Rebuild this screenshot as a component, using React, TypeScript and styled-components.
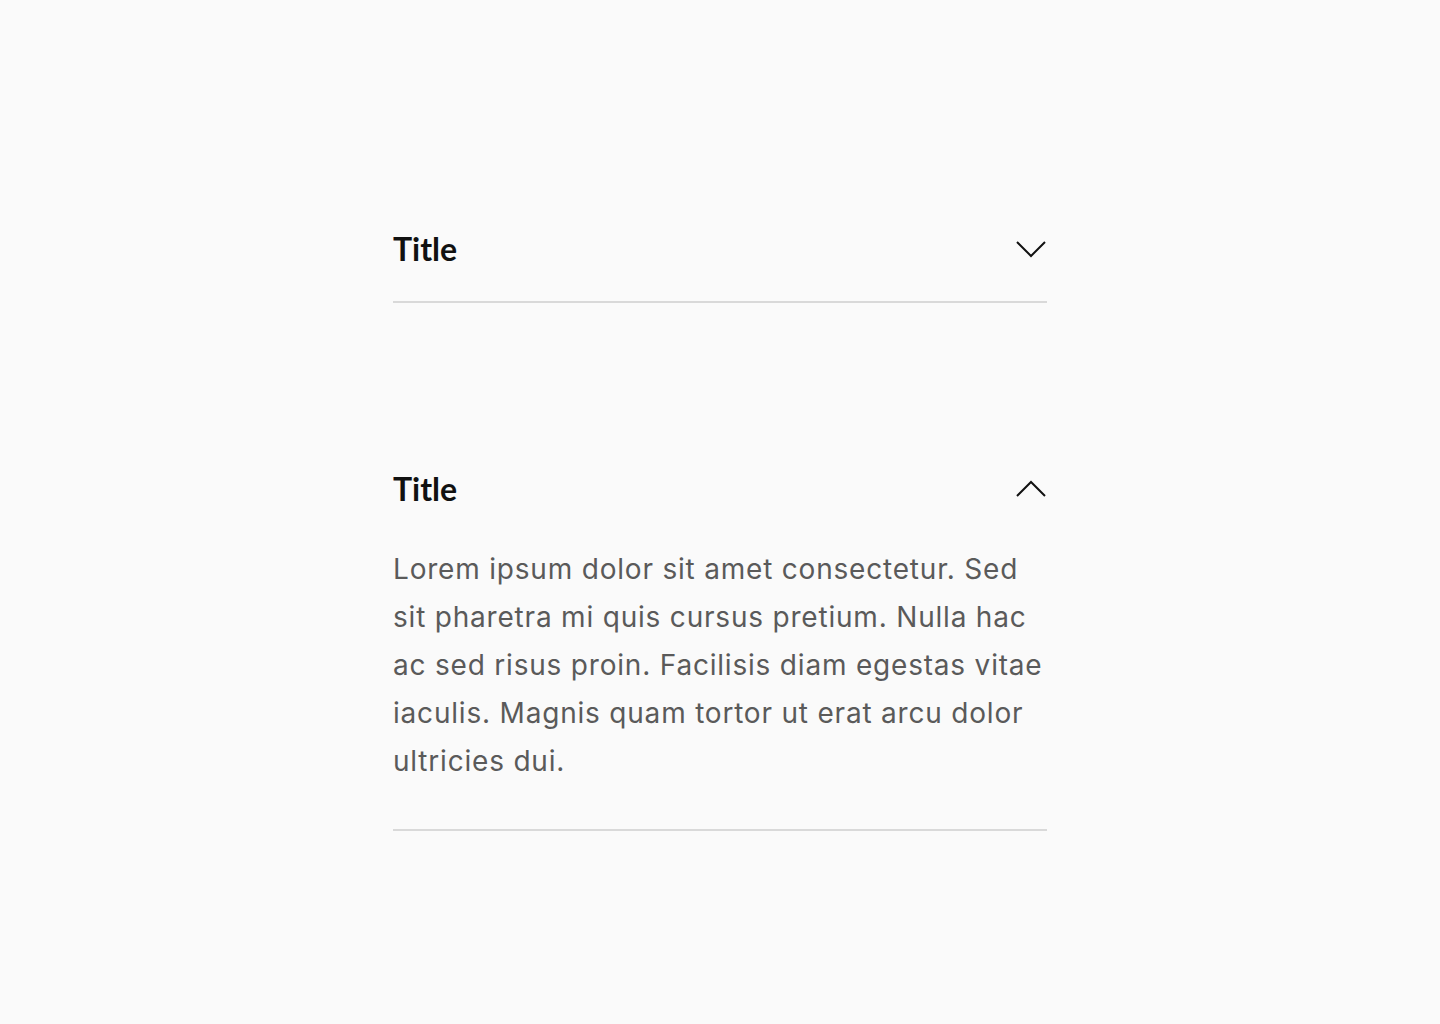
import React, { useState } from "react";
import styled, { createGlobalStyle } from "styled-components";

const Global = createGlobalStyle`
  html, body { margin: 0; padding: 0; background: #fafafa; }
  body { font-family: Lato, "Noto Sans", sans-serif; }
`;

const Page = styled.main`
  min-height: 1024px;
  display: flex;
  justify-content: center;
  padding-top: 229px;
  box-sizing: border-box;
`;

const List = styled.div`
  width: 654px;
  display: flex;
  flex-direction: column;
  gap: 166px;
`;

const Item = styled.section<{ $open: boolean }>`
  border-bottom: 2px solid #d9d9d9;
  padding-bottom: ${(p) => (p.$open ? 44 : 32)}px;
`;

const Header = styled.button`
  all: unset;
  width: 100%;
  height: 40px;
  display: flex;
  align-items: center;
  justify-content: space-between;
  cursor: pointer;
`;

const Title = styled.h3`
  margin: 0;
  font-size: 32px;
  line-height: 40px;
  font-weight: 700;
  color: #111;
`;

const Body = styled.p`
  margin: 36px 0 0;
  font-family: Inter, "Noto Sans", sans-serif;
  font-size: 28px;
  letter-spacing: 0.8px;
  line-height: 48px;
  color: #5a5a5a;
  font-weight: 400;
`;

const Chevron = styled.svg<{ $up: boolean }>`
  width: 32px;
  height: 18px;
  transform: ${(p) => (p.$up ? "rotate(180deg)" : "none")};
`;

const Icon = ({ up }: { up: boolean }) => (
  <Chevron $up={up} viewBox="0 0 32 18" fill="none">
    <path d="M2 2 L16 16 L30 2" stroke="#111" strokeWidth="2" />
  </Chevron>
);

const AccordionItem = ({ title, body, defaultOpen }: { title: string; body: string; defaultOpen: boolean }) => {
  const [open, setOpen] = useState(defaultOpen);
  return (
    <Item $open={open}>
      <Header onClick={() => setOpen(!open)}>
        <Title>{title}</Title>
        <Icon up={open} />
      </Header>
      {open && <Body>{body}</Body>}
    </Item>
  );
};

const text =
  "Lorem ipsum dolor sit amet consectetur. Sed sit pharetra mi quis cursus pretium. Nulla hac ac sed risus proin. Facilisis diam egestas vitae iaculis. Magnis quam tortor ut erat arcu dolor ultricies dui.";

export default function App() {
  return (
    <>
      <Global />
      <Page>
        <List>
          <AccordionItem title="Title" body={text} defaultOpen={false} />
          <AccordionItem title="Title" body={text} defaultOpen={true} />
        </List>
      </Page>
    </>
  );
}
